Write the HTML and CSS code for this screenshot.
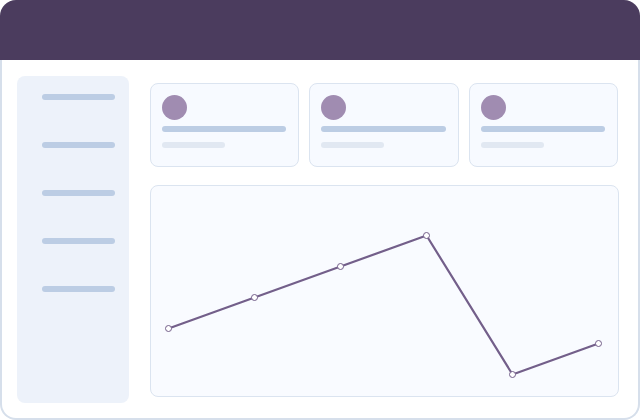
FILE: index.html
```html
<!DOCTYPE html>
<html lang="en">
<head>
  <meta charset="UTF-8">
  <meta name="viewport" content="width=device-width, initial-scale=1.0">
  <title>Dashboard</title>
  <link rel="stylesheet" href="styles.css">
</head>
<body>
  <div class="window">
    <header class="titlebar"></header>

    <div class="main">
      <aside class="sidebar">
        <span class="nav-bar"></span>
        <span class="nav-bar"></span>
        <span class="nav-bar"></span>
        <span class="nav-bar"></span>
        <span class="nav-bar"></span>
      </aside>

      <section class="content">
        <div class="cards">
          <div class="card">
            <span class="dot"></span>
            <span class="line-long"></span>
            <span class="line-short"></span>
          </div>
          <div class="card">
            <span class="dot"></span>
            <span class="line-long"></span>
            <span class="line-short"></span>
          </div>
          <div class="card">
            <span class="dot"></span>
            <span class="line-long"></span>
            <span class="line-short"></span>
          </div>
        </div>

        <div class="chart">
          <svg viewBox="0 0 467 210" preserveAspectRatio="none">
            <polyline class="trend" points="17.5,142.5 103.5,111.5 189.5,80.5 275.5,49.5 361.5,188.5 447.5,157.5"/>
            <circle class="point" cx="17.5" cy="142.5" r="3"/>
            <circle class="point" cx="103.5" cy="111.5" r="3"/>
            <circle class="point" cx="189.5" cy="80.5" r="3"/>
            <circle class="point" cx="275.5" cy="49.5" r="3"/>
            <circle class="point" cx="361.5" cy="188.5" r="3"/>
            <circle class="point" cx="447.5" cy="157.5" r="3"/>
          </svg>
        </div>
      </section>
    </div>
  </div>
</body>
</html>
```

FILE: styles.css
```css
/* base */
* {
  margin: 0;
  padding: 0;
  box-sizing: border-box;
}
body {
  font-family: 'Open Sans', sans-serif;
  background: #fff;
  width: 640px;
  height: 420px;
  overflow: hidden;
}
.window {
  width: 640px;
  height: 420px;
  display: flex;
  flex-direction: column;
}
.titlebar {
  height: 60px;
  flex-shrink: 0;
  background: #4b3c5e;
  border-radius: 16px 16px 0 0;
}
.main {
  flex: 1;
  display: flex;
  gap: 21px;
  background: #fff;
  border: 2px solid #d6dfeb;
  border-top: none;
  border-radius: 0 0 16px 16px;
  padding: 16px 19px 15px 15px;
}
/* sidebar */
.sidebar {
  width: 112px;
  flex-shrink: 0;
  background: #edf2fa;
  border-radius: 8px;
  padding: 18px 14px 0 25px;
  display: flex;
  flex-direction: column;
  gap: 42px;
}
.nav-bar {
  display: block;
  height: 6px;
  border-radius: 3px;
  background: #bccde4;
}
/* content */
.content {
  flex: 1;
  padding-top: 7px;
  display: flex;
  flex-direction: column;
  gap: 18px;
}
.cards {
  display: flex;
  gap: 10px;
  padding-right: 1px;
}
.card {
  flex: 1;
  height: 84px;
  background: #f7faff;
  border: 1px solid #dbe4f0;
  border-radius: 8px;
  padding: 11px 12px 0 11px;
  display: flex;
  flex-direction: column;
}
.card .dot {
  width: 25px;
  height: 25px;
  border-radius: 50%;
  background: #a08cb1;
}
.card .line-long {
  margin-top: 6px;
  height: 6px;
  border-radius: 3px;
  background: #bccde4;
}
.card .line-short {
  margin-top: 10px;
  width: 63px;
  height: 6px;
  border-radius: 3px;
  background: #e1e8f2;
}
.chart {
  flex: 1;
  margin-bottom: 6px;
  background: #f9fbff;
  border: 1px solid #dbe4f0;
  border-radius: 8px;
  overflow: hidden;
}
.chart svg {
  display: block;
  width: 100%;
  height: 100%;
}
.trend {
  fill: none;
  stroke: #735f8a;
  stroke-width: 2.2;
  stroke-linejoin: round;
}
.point {
  fill: #fff;
  stroke: #735f8a;
  stroke-width: 1;
}
```
